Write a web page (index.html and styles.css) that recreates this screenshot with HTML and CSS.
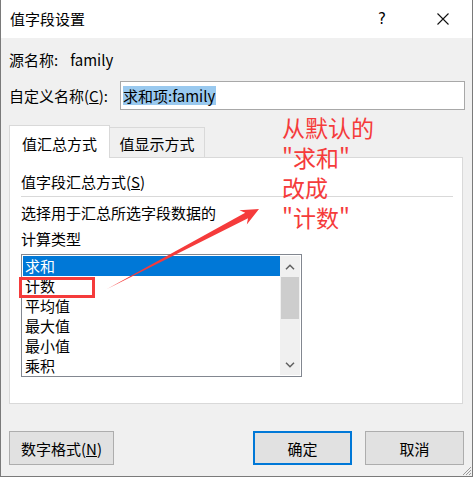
FILE: index.html
```html
<!DOCTYPE html>
<html lang="zh-CN">
<head>
<meta charset="utf-8">
<title>值字段设置</title>
<link rel="stylesheet" href="styles.css">
</head>
<body>
<div class="dialog">
  <div class="titlebar">
    <span class="title">值字段设置</span>
    <div class="tb-btns">
      <span class="tb-btn help">?</span>
      <span class="tb-btn close">
        <svg width="12" height="12" viewBox="0 0 12 12"><path d="M0.5 0.5 L11.5 11.5 M11.5 0.5 L0.5 11.5" stroke="#111" stroke-width="1.1" fill="none"/></svg>
      </span>
    </div>
  </div>
  <div class="content">
    <div class="row src"><span class="lbl">源名称:</span><span class="val">family</span></div>
    <div class="row name">
      <span class="lbl2">自定义名称(<u>C</u>):</span>
      <div class="input"><span class="sel">求和项:family</span></div>
    </div>
    <div class="tabs">
      <div class="tab active">值汇总方式</div>
      <div class="tab">值显示方式</div>
    </div>
    <div class="panel">
      <div class="ph">值字段汇总方式(<u>S</u>)</div>
      <div class="sep"></div>
      <div class="desc">选择用于汇总所选字段数据的</div>
      <div class="desc">计算类型</div>
      <div class="listbox">
        <div class="items">
          <div class="item selected">求和</div>
          <div class="item">计数</div>
          <div class="item">平均值</div>
          <div class="item">最大值</div>
          <div class="item">最小值</div>
          <div class="item">乘积</div>
        </div>
        <div class="scroll">
          <div class="sb-arrow"><svg width="10" height="6" viewBox="0 0 10 6"><path d="M1 5.2 L5 1.2 L9 5.2" stroke="#606060" stroke-width="1.5" fill="none"/></svg></div>
          <div class="sb-thumb"></div>
          <div class="sb-track"></div>
          <div class="sb-arrow"><svg width="10" height="6" viewBox="0 0 10 6"><path d="M1 0.8 L5 4.8 L9 0.8" stroke="#606060" stroke-width="1.5" fill="none"/></svg></div>
        </div>
      </div>
    </div>
    <div class="buttons">
      <button class="btn fmt">数字格式(<u>N</u>)</button>
      <span class="spacer"></span>
      <button class="btn ok">确定</button>
      <button class="btn cancel">取消</button>
    </div>
  </div>

  <div class="note">从默认的<br>"求和"<br>改成<br>"计数"</div>
  <div class="mark"></div>
  <svg class="arrow" width="473" height="477" viewBox="0 0 473 477">
    <polygon points="107,289 245.2,212.8 239.4,210.3 259,209 246.8,224.5 248,218.2" fill="#f53b3b"/>
  </svg>
  <svg class="grip" width="10" height="10" viewBox="0 0 10 10">
    <path d="M9 1 L1 9 M9 4 L4 9 M9 7 L7 9" stroke="#9a9a9a" stroke-width="1" fill="none"/>
  </svg>
</div>
</body>
</html>
```

FILE: styles.css
```css
html, body {
  margin: 0;
  padding: 0;
}
body {
  width: 473px;
  height: 477px;
  overflow: hidden;
  font-family: "Noto Sans CJK SC", "Noto Sans", sans-serif;
  font-size: 15px;
  color: #000;
}
.dialog {
  position: relative;
  box-sizing: border-box;
  width: 473px;
  height: 477px;
  background: #f0f0f0;
  border: 1px solid #7a7a7a;
  border-top: none;
  display: flex;
  flex-direction: column;
}
.titlebar {
  height: 38px;
  flex: none;
  background: #fff;
  display: flex;
  align-items: center;
  padding-left: 9px;
}
.title {
  font-size: 15px;
  line-height: 20px;
  flex: 1;
}
.tb-btns {
  display: flex;
  height: 38px;
}
.tb-btn {
  width: 58px;
  display: flex;
  align-items: center;
  justify-content: center;
}
.help {
  font-family: "DejaVu Sans", sans-serif;
  font-size: 15px;
  width: 58px;
  margin-right: 1px;
  padding-right: 4px;
  box-sizing: border-box;
}
.close svg { display: block; margin-left: -1px; margin-top: -1px; }
.content {
  flex: 1;
  padding: 0 9px 0 8px;
  display: flex;
  flex-direction: column;
}
.row {
  display: flex;
  align-items: center;
}
.src {
  margin-top: 12px;
  height: 20px;
  line-height: 20px;
}
.src .val { margin-left: 12px; }
.name {
  margin-top: 11px;
  height: 29px;
}
.lbl2 {
  width: 111px;
  flex: none;
}
.input {
  flex: 1;
  margin-right: -2px;
  height: 29px;
  box-sizing: border-box;
  border: 1px solid #a8a8a8;
  background: #fff;
  display: flex;
  align-items: center;
  padding-left: 2px;
}
.sel {
  background: #99c9ef;
  line-height: 19px;
  padding-right: 1px;
}
.tabs {
  margin-top: 15px;
  height: 32px;
  display: flex;
  align-items: flex-start;
  position: relative;
  z-index: 1;
}
.tab {
  box-sizing: border-box;
  border: 1px solid #d9d9d9;
  border-bottom: none;
  display: flex;
  align-items: center;
  justify-content: center;
}
.tab.active {
  width: 101px;
  height: 33px;
  background: #fff;
  padding-top: 2px;
  position: relative;
  z-index: 2;
}
.tab:not(.active) {
  width: 96px;
  height: 30px;
  margin-top: 2px;
  margin-left: -1px;
  background: #f0f0f0;
  padding-top: 2px;
}
.panel {
  box-sizing: border-box;
  height: 247px;
  background: #fff;
  border: 1px solid #d9d9d9;
  padding: 0 9px 0 11px;
  display: flex;
  flex-direction: column;
}
.ph {
  margin-top: 14px;
  line-height: 20px;
}
.sep {
  margin-top: 4px;
  height: 1px;
  background: #d9d9d9;
}
.desc {
  margin-top: 6px;
  line-height: 20px;
}
.listbox {
  margin-top: 5px;
  width: 281px;
  height: 123px;
  box-sizing: border-box;
  border: 1px solid #828790;
  padding: 1px;
  display: flex;
  overflow: hidden;
}
.items {
  width: 257px;
  flex: none;
  overflow: hidden;
}
.item {
  height: 20px;
  line-height: 20px;
  padding-left: 2px;
  white-space: nowrap;
}
.item.selected {
  background: #0078d7;
  color: #fff;
}
.scroll {
  width: 20px;
  flex: none;
  background: #f0f0f0;
  display: flex;
  flex-direction: column;
}
.sb-arrow {
  height: 21px;
  display: flex;
  align-items: center;
  justify-content: center;
}
.sb-arrow svg { display: block; }
.sb-thumb {
  height: 42px;
  background: #cdcdcd;
  margin: 0 1px 0 1px;
}
.sb-track { flex: 1; }
.buttons {
  margin-top: 27px;
  display: flex;
}
.spacer { flex: 1; }
.btn {
  font-family: "Noto Sans CJK SC", "Noto Sans", sans-serif;
  font-size: 15px;
  color: #000;
  height: 34px;
  box-sizing: border-box;
  background: #e1e1e1;
  border: 1px solid #adadad;
  padding: 0;
  margin: 0;
}
.fmt { width: 105px; }
.ok {
  width: 99px;
  border: 2px solid #0078d7;
}
.cancel {
  width: 99px;
  margin-left: 13px;
  margin-right: -1px;
}
.note {
  position: absolute;
  left: 281px;
  top: 112px;
  font-size: 23px;
  line-height: 30px;
  color: #f53b3b;
  font-family: "Noto Sans CJK SC", "DejaVu Sans", sans-serif;
}
.mark {
  position: absolute;
  left: 18px;
  top: 277px;
  width: 76px;
  height: 21px;
  box-sizing: border-box;
  border: 3px solid #f53b3b;
}
.arrow {
  position: absolute;
  left: -1px;
  top: 0;
  pointer-events: none;
}
.grip {
  position: absolute;
  right: 0;
  bottom: 0;
}
```
